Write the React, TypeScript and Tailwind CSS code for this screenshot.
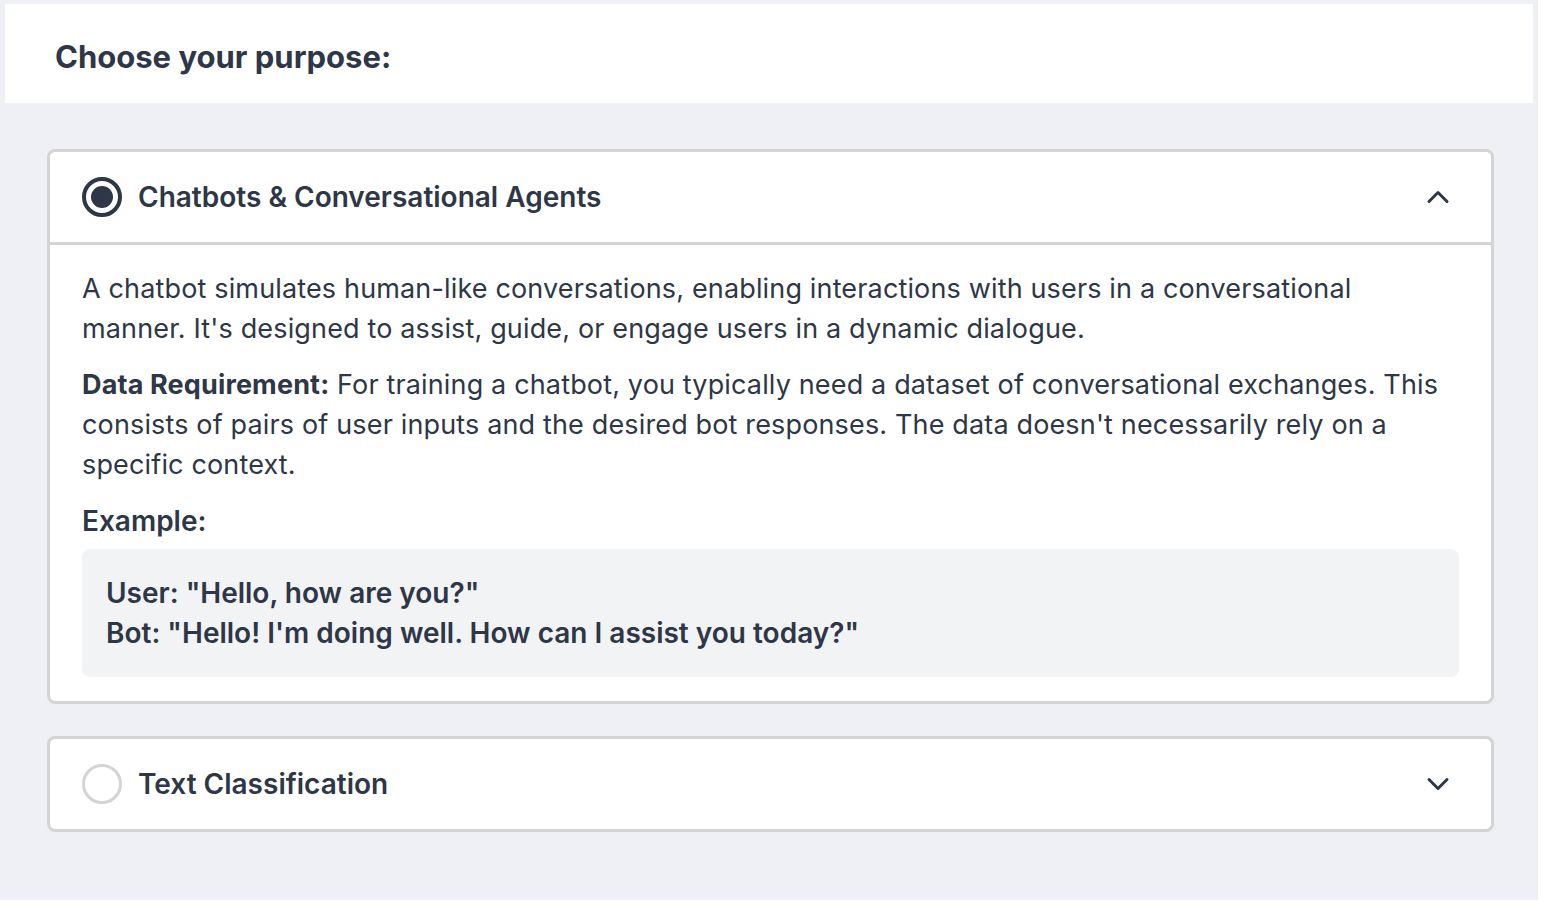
import React, { useState } from 'react';
import { ChevronDown, ChevronUp } from 'lucide-react';

interface Purpose {
  id: string;
  title: string;
}

const purposes: Purpose[] = [
  { id: 'chatbot', title: 'Chatbots & Conversational Agents' },
  { id: 'classification', title: 'Text Classification' },
];

const Radio: React.FC<{ checked: boolean }> = ({ checked }) =>
  checked ? (
    <span className="flex h-10 w-10 shrink-0 items-center justify-center rounded-full border-4 border-[#2d3748] bg-white">
      <span className="h-[22px] w-[22px] rounded-full bg-[#2d3748]" />
    </span>
  ) : (
    <span className="h-10 w-10 shrink-0 rounded-full border-[3px] border-[#d4d4d4] bg-white" />
  );

const ChatbotDetails: React.FC = () => (
  <div className="border-t-[3px] border-[#d4d4d4] px-8 pt-6 pb-6 text-[27px] leading-[40px] tracking-[0.15px] text-[#2d3748]">
    <p>
      A chatbot simulates human-like conversations, enabling interactions with users in a conversational
      <br />
      manner. It's designed to assist, guide, or engage users in a dynamic dialogue.
    </p>
    <p className="mt-4">
      <span className="font-bold">Data Requirement:</span> For training a chatbot, you typically need a dataset
      of conversational exchanges. This consists of pairs of user inputs and the desired bot responses. The
      data doesn't necessarily rely on a specific context.
    </p>
    <p className="mt-4 text-[28px] font-semibold tracking-normal">Example:</p>
    <div className="mt-2 rounded-lg bg-[#f2f3f5] px-6 py-6 text-[28px] font-semibold tracking-normal">
      <p>User: "Hello, how are you?"</p>
      <p>Bot: "Hello! I'm doing well. How can I assist you today?"</p>
    </div>
  </div>
);

export default function App() {
  const [selected, setSelected] = useState('chatbot');

  return (
    <div
      className="h-[900px] w-[1538px] bg-[#eef0f5] px-[5px] pt-[4px]"
      style={{ fontFamily: 'Inter, "Noto Sans", sans-serif' }}
    >
      <header className="flex h-[99px] items-center bg-white pl-[50px] pt-[7px]">
        <h1 className="text-[31px] font-bold text-[#2d3748]">Choose your purpose:</h1>
      </header>

      <div className="flex flex-col gap-8 pl-[42px] pr-[39px] pt-[46px]">
        {purposes.map((p) => {
          const open = selected === p.id;
          return (
            <div key={p.id} className="rounded-lg border-[3px] border-[#d4d4d4] bg-white">
              <button
                onClick={() => setSelected(p.id)}
                className="flex w-full items-center gap-4 px-8 py-6 text-left"
              >
                <Radio checked={open} />
                <span className="flex-1 text-[28px] font-semibold text-[#2d3748]">{p.title}</span>
                {open ? (
                  <ChevronUp size={36} strokeWidth={2} className="mr-[3px] text-[#2d3748]" />
                ) : (
                  <ChevronDown size={36} strokeWidth={2} className="mr-[3px] text-[#2d3748]" />
                )}
              </button>
              {open && p.id === 'chatbot' && <ChatbotDetails />}
            </div>
          );
        })}
      </div>
    </div>
  );
}
